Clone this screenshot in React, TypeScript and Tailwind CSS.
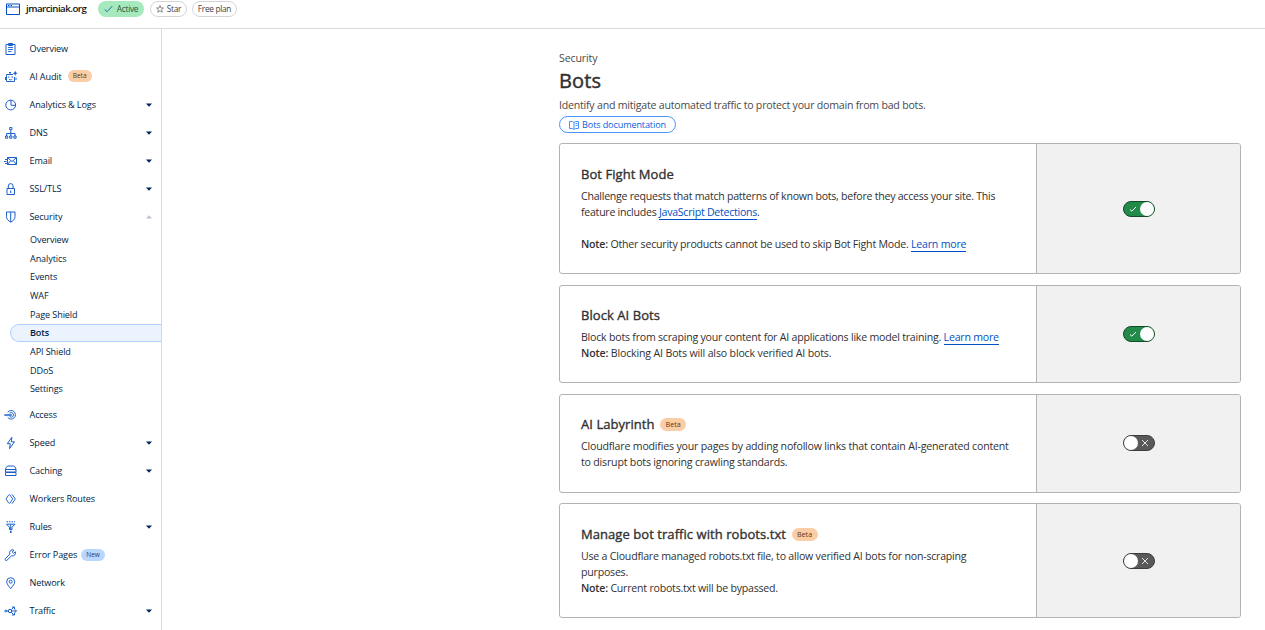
import { type ReactNode } from "react";

type Tag = { label: string; tone: "beta" | "new" };
type Item = { label: string; icon: ReactNode; tag?: Tag; caret?: "down" | "up"; children?: string[] };

function Glyph({ children }: { children: ReactNode }) {
  return (
    <svg className="h-[14px] w-[14px] shrink-0 text-[#1a5fca]" viewBox="0 0 14 14" fill="none" stroke="currentColor" strokeWidth="1">
      {children}
    </svg>
  );
}

const items: Item[] = [
  {
    label: "Overview",
    icon: (
      <Glyph>
        <path d="M2 2.500h9v10H2zM4.500 1.500h4v2h-4z" />
        <path d="M4 5.500h5M4 7.500h5M4 9.500h3.500" strokeWidth=".9" />
      </Glyph>
    ),
  },
  {
    label: "AI Audit",
    tag: { label: "Beta", tone: "beta" },
    icon: (
      <Glyph>
        <path d="M9 4.500H2.500v7h8V7M1.500 7v3M12 7.500V10M6 4.500v-2M5 2.500h2M5 9.300c1 .7 2.200.7 3.200 0" strokeWidth=".95" />
        <path d="M4.200 6.500h1.200v1.200H4.200zM7.700 6.500h1.200v1.200H7.700zM11.200.8l.8 1.700 1.700.8-1.700.8-.8 1.700-.8-1.700-1.700-.8 1.700-.8z" fill="currentColor" stroke="none" />
      </Glyph>
    ),
  },
  {
    label: "Analytics & Logs",
    caret: "down",
    icon: (
      <Glyph>
        <circle cx="6.700" cy="7" r="4.900" />
        <path d="M7 2v5.300h4.800" />
      </Glyph>
    ),
  },
  {
    label: "DNS",
    caret: "down",
    icon: (
      <Glyph>
        <path d="M5.700 1.500h2.200v2.200H5.700zM1.500 10h2.200v2.200H1.500zM5.700 10h2.200v2.200H5.700zM9.900 10h2.200v2.200H9.900zM6.800 4v6M2.600 10V7.500H11V10" />
      </Glyph>
    ),
  },
  {
    label: "Email",
    caret: "down",
    icon: (
      <Glyph>
        <path d="M3.500 3.500h9v7h-9zM3.500 3.500l4.500 4 4.500-4M3.500 10.500l3.200-3.900M12.500 10.500L9.300 6.600M1 5.500h2M0 7.500h2.500M1 9.500h2" />
      </Glyph>
    ),
  },
  {
    label: "SSL/TLS",
    caret: "down",
    icon: (
      <Glyph>
        <path d="M3 6.500h7.500v6H3zM4.300 6.500V4a2.400 2.400 0 0 1 4.800 0v2.500M6.700 8.500V11" />
      </Glyph>
    ),
  },
  {
    label: "Security",
    caret: "up",
    icon: (
      <Glyph>
        <path d="M2.500 2h8.500v4.500c0 2.500-1.800 4.500-4.200 5.600-2.500-1.100-4.300-3.100-4.300-5.600zM6.700 2v9.900" />
      </Glyph>
    ),
    children: ["Overview", "Analytics", "Events", "WAF", "Page Shield", "Bots", "API Shield", "DDoS", "Settings"],
  },
  {
    label: "Access",
    icon: (
      <Glyph>
        <path d="M3.700 4.200a4.300 4.300 0 1 1 0 5.200M5.600 5.200a2.300 2.300 0 1 1 0 3.300" strokeWidth=".95" />
        <path d="M.3 7h7.500" strokeWidth="1.500" />
      </Glyph>
    ),
  },
  {
    label: "Speed",
    caret: "down",
    icon: (
      <Glyph>
        <path d="M7.900 1.300L3.300 7.700h3L5.500 12.700l5-6.900H7.300z" />
      </Glyph>
    ),
  },
  {
    label: "Caching",
    caret: "down",
    icon: (
      <Glyph>
        <path d="M1.500 5.500c.5-2 1.300-3.500 2.500-3.500h5.500c1.200 0 2 1.500 2.500 3.500zM1.500 5.500H12v2.500H1.500zM1.500 8.500H12v3H1.500z" />
      </Glyph>
    ),
  },
  {
    label: "Workers Routes",
    icon: (
      <Glyph>
        <path d="M4.800 2.800L2 7l2.800 4.200M5.500 2.300L8.700 7l-3.200 4.700M8 2.300L11.300 7 8 11.700" strokeWidth=".95" />
      </Glyph>
    ),
  },
  {
    label: "Rules",
    caret: "down",
    icon: (
      <Glyph>
        <path d="M2.500 4.200h8.500L8 7.200V9.500H5.500V7.200zM6.700 4.500v5" />
        <path d="M2.500 1.800h8.500" strokeDasharray="1.500 1" />
        <path d="M6 10.700h1.600v2.300H6z" fill="currentColor" stroke="none" />
      </Glyph>
    ),
  },
  {
    label: "Error Pages",
    tag: { label: "New", tone: "new" },
    icon: (
      <Glyph>
        <path d="M9.900 2.100a3 3 0 0 0-4 4L1.400 10.600a1.100 1.100 0 0 0 1.600 1.600l4.600-4.400a3 3 0 0 0 3.700-4L9.600 5.400 8.300 4.100z" />
      </Glyph>
    ),
  },
  {
    label: "Network",
    icon: (
      <Glyph>
        <path d="M6.700 12.700C4.300 9.800 2.700 7.700 2.700 5.700a4 4 0 0 1 8 0c0 2-1.600 4.100-4 7z" />
        <circle cx="6.700" cy="5.700" r="1.500" />
      </Glyph>
    ),
  },
  {
    label: "Traffic",
    caret: "down",
    icon: (
      <Glyph>
        <circle cx="6" cy="7" r="1.700" />
        <circle cx="1.800" cy="7" r="1" />
        <path d="M2.800 7h1.500M7.300 5.700l2.500-2.500M7.800 7h4.500M7.300 8.300l2.500 2.500M8 3h2.500v2.200M10.800 5.300L12.500 7l-1.700 1.700M8 11h2.500V8.800" />
      </Glyph>
    ),
  },
];

function Caret({ dir }: { dir: "down" | "up" }) {
  return (
    <svg className={dir === "down" ? "h-1 w-[6px] text-[#00245c]" : "h-1 w-[6px] text-[#b9c5d3]"} viewBox="0 0 6 4" fill="currentColor">
      <path d={dir === "down" ? "M0 .5h6L3 3.700z" : "M0 3.500h6L3 .3z"} />
    </svg>
  );
}

function NavRow({ item }: { item: Item }) {
  return (
    <li>
      <a className="flex h-7 items-center pr-[9px] pl-1">
        {item.icon}
        <span className="ml-[11.500px] text-[9.100px] tracking-[-0.120px] text-[#001c43]">{item.label}</span>
        {item.tag && (
          <span
            className={
              item.tag.tone === "beta"
                ? "mb-px ml-[6px] flex h-3 w-6 items-center justify-center rounded-full bg-[#fbcda5] text-[6.500px] text-[#5c3a1c]"
                : "ml-[4px] flex h-3 w-6 items-center justify-center rounded-full bg-[#b9d6ff] text-[6.500px] text-[#1d3f6e]"
            }
          >
            {item.tag.label}
          </span>
        )}
        <span className="ml-auto">{item.caret && <Caret dir={item.caret} />}</span>
      </a>
      {item.children && (
        <ul className="mb-[2.500px]">
          {item.children.map((c) => (
            <li key={c} className="flex h-[18.660px] items-center pl-[10px] text-[9.100px] tracking-[-0.120px] text-[#001c43]">
              <a
                className={
                  c === "Bots"
                    ? "flex h-[18px] w-full items-center rounded-l-full border border-r-0 border-[#b0d0fb] bg-[#ebf3fe] pl-[19px] font-semibold"
                    : "pl-5"
                }
              >
                {c}
              </a>
            </li>
          ))}
        </ul>
      )}
    </li>
  );
}

function Toggle({ on }: { on: boolean }) {
  return on ? (
    <span className="flex h-4 w-8 items-center justify-between rounded-full border border-[#144a29] bg-[#228b49] pl-[5px]">
      <svg className="h-[8px] w-[8px]" viewBox="0 0 8 8" fill="none" stroke="white" strokeWidth="1">
        <path d="M1 4.500l1.900 1.700L7 2" />
      </svg>
      <span className="h-[14px] w-[14px] rounded-full bg-white" />
    </span>
  ) : (
    <span className="flex h-4 w-8 items-center justify-between rounded-full border border-[#3d3d3d] bg-[#595959] pr-[5px]">
      <span className="h-[14px] w-[14px] rounded-full bg-white" />
      <svg className="h-[8px] w-[8px]" viewBox="0 0 8 8" fill="none" stroke="#e5e5e5" strokeWidth="1">
        <path d="M1 1l6 6M7 1L1 7" />
      </svg>
    </span>
  );
}

function Link({ children }: { children: ReactNode }) {
  return <a className="border-b border-[#0051c3] text-[#0051c3]">{children}</a>;
}

type CardProps = { title: string; beta?: boolean; on: boolean; size: string; inset: string; children: ReactNode };

function Card({ title, beta, on, size, inset, children }: CardProps) {
  return (
    <section className={`flex overflow-hidden rounded-[3px] border border-[#b3b3b3] ${size}`}>
      <div className={`w-[476px] pl-[21px] ${inset}`}>
        <h2 className="flex h-5 items-center text-[13px] tracking-[0.060px] text-[#313131]">
          <span className="[-webkit-text-stroke:0.350px_#313131]">{title}</span>
          {beta && (
            <span className="mb-px ml-[5.500px] flex h-[13px] w-[26px] items-center justify-center rounded-full bg-[#fbcda5] text-[7.200px] tracking-normal text-[#5c3a1c]">
              Beta
            </span>
          )}
        </h2>
        <div className="mt-[3px] text-[10.600px] leading-4 tracking-[-0.220px] whitespace-nowrap text-[#313131]">{children}</div>
      </div>
      <div className="flex flex-1 items-center justify-center border-l border-[#b3b3b3] bg-[#f1f1f1]">
        <Toggle on={on} />
      </div>
    </section>
  );
}

export default function App() {
  return (
    <div className="flex h-[630px] w-[1265px] flex-col overflow-hidden bg-white font-['Open_Sans','Noto_Sans',sans-serif]">
      <header className="flex h-[29px] shrink-0 items-start border-b border-[#d9d9d9] pl-[6px]">
        <svg className="mt-[3px] h-3 w-[14px] text-[#0051c3]" viewBox="0 0 14 12" fill="none" stroke="currentColor">
          <path d="M.5 1h13v10.500H.5zM.5 4h13" />
          <path d="M2 2.500h4" strokeDasharray="1 .5" />
        </svg>
        <span className="ml-[6px] h-[18px] w-[61px] text-[9.700px] leading-[18px] font-semibold tracking-[-0.500px] text-[#111]">
          jmarciniak.org
        </span>
        <span className="mt-px ml-[11px] flex h-4 w-[46px] items-center justify-center gap-1 rounded-full bg-[#a6e9bd] text-[8.300px] tracking-[-0.250px] text-[#245c38]">
          <svg className="h-[8px] w-[9px]" viewBox="0 0 9 8" fill="none" stroke="#246ab0">
            <path d="M.7 4.500l2.300 2.200L8.300 1" />
          </svg>
          Active
        </span>
        <span className="mt-px ml-[6px] flex h-4 w-[37px] items-center justify-center gap-[3px] rounded-full border border-[#d5d5d5] text-[8.300px] tracking-[-0.250px] text-[#444]">
          <svg className="h-[8px] w-[8px]" viewBox="0 0 16 16" fill="none" stroke="#666" strokeWidth="1.500">
            <path d="M8 1l2 5h5l-4 3.500 1.500 5L8 11.500l-4.500 3 1.500-5L1 6h5z" />
          </svg>
          Star
        </span>
        <span className="mt-px ml-[5px] flex h-4 w-[45px] items-center justify-center rounded-full border border-[#d5d5d5] text-[8.300px] tracking-[-0.300px] text-[#444]">
          Free plan
        </span>
      </header>
      <div className="flex min-h-0 flex-1">
        <nav className="w-[162px] shrink-0 border-r border-[#d9d9d9] pt-[5.500px]">
          <ul>
            {items.map((item) => (
              <NavRow key={item.label} item={item} />
            ))}
          </ul>
        </nav>
        <main className="ml-[397px] w-[682px] pt-[21px] text-[#313131]">
          <p className="h-4 text-[10.600px] leading-4 tracking-[-0.120px] text-[#4a4a4a]">Security</p>
          <h1 className="mt-px h-7 text-[20px] leading-7 tracking-[0.100px] [-webkit-text-stroke:0.450px_#313131]">Bots</h1>
          <p className="mt-[2px] h-4 text-[10.600px] leading-4 tracking-[-0.220px] text-[#4a4a4a]">
            Identify and mitigate automated traffic to protect your domain from bad bots.
          </p>
          <a className="mt-[3px] flex h-[17px] w-[117px] items-center justify-center gap-[3px] rounded-full border border-[#4693ff] text-[9.100px] tracking-[-0.130px] text-[#0a60e0]">
            <svg className="h-[10px] w-[10px]" viewBox="0 0 10 10" fill="none" stroke="#4693ff">
              <path d="M.5 1.500h3L5 2.500l1.500-1h3v7h-3L5 9.500l-1.500-1h-3zM5 2.500v7M6.500 3.500h2M6.500 5.500h2" />
            </svg>
            Bots documentation
          </a>
          <div className="mt-[10px]">
            <Card title="Bot Fight Mode" on size="h-[131px]" inset="pt-[21px]">
              <span className="tracking-[-0.255px]">Challenge requests that match patterns of known bots, before they access your site. This</span>
              <br />
              <span className="tracking-[-0.260px]">
                feature includes <Link>JavaScript Detections</Link>.
              </span>
              <br />
              <br />
              <strong className="font-semibold">Note:</strong> Other security products cannot be used to skip Bot Fight Mode.{" "}
              <Link>Learn more</Link>
            </Card>
            <Card title="Block AI Bots" on size="mt-[11px] h-[98px]" inset="pt-5">
              Block bots from scraping your content for AI applications like model training. <Link>Learn more</Link>
              <br />
              <span className="tracking-[-0.160px]">
                <strong className="font-semibold">Note:</strong> Blocking AI Bots will also block verified AI bots.
              </span>
            </Card>
            <Card title="AI Labyrinth" beta on={false} size="mt-[11px] h-[99px] [&>div:last-child]:pb-px" inset="pt-5">
              <span className="tracking-[-0.190px]">
                Cloudflare modifies your pages by adding nofollow links that contain AI-generated content
                <br />
                to disrupt bots ignoring crawling standards.
              </span>
            </Card>
            <Card title="Manage bot traffic with robots.txt" beta on={false} size="mt-[10px] h-[115px]" inset="pt-[21px]">
              Use a Cloudflare managed robots.txt file, to allow verified AI bots for non-scraping
              <br />
              purposes.
              <br />
              <strong className="font-semibold">Note:</strong> Current robots.txt will be bypassed.
            </Card>
          </div>
        </main>
      </div>
    </div>
  );
}
